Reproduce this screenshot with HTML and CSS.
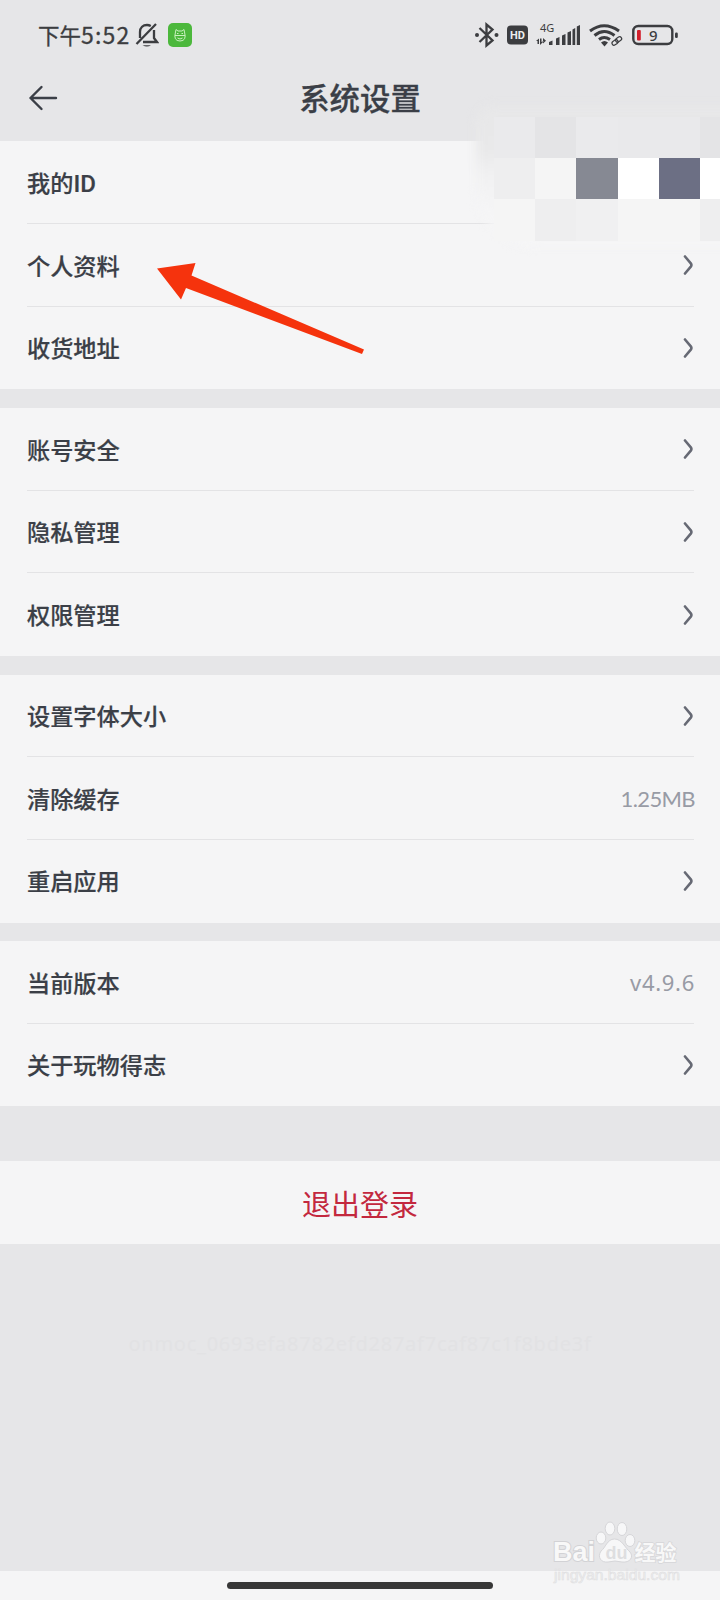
FILE: index.html
```html
<!DOCTYPE html>
<html lang="zh-CN">
<head>
<meta charset="utf-8">
<title>系统设置</title>
<link rel="stylesheet" href="styles.css">
</head>
<body>
<svg class="defs" width="0" height="0"><symbol id="chevron" viewBox="0 0 12 20"><path d="M3 1.500 8.800 8.400Q10 10 8.800 11.600L3 18.500" fill="none" stroke="currentColor" stroke-width="2.600" stroke-linecap="round"/></symbol></svg>
<div class="screen">
  <div class="status">
    <span class="time">下午<span class="clock">5:52</span></span>
    <svg class="bell" width="24" height="26" viewBox="0 0 24 26" fill="none" stroke="currentColor" stroke-width="2.300"><path d="M5 16V10C5 5.500 8 3 12 3Q14 3 15.800 4M19 8V16L22 20H8M1.500 22 21 2"/><path d="M7.500 23.200H16Q12 26 7.500 23.200Z" fill="currentColor" stroke="none"/></svg>
    <svg class="app" width="24" height="24" viewBox="0 0 24 24"><rect width="24" height="24" rx="5" fill="#4cb83c"/><g fill="none" stroke="#c9f1bf" stroke-width="1"><path d="M7.500 9 8 6.500 10 8H14L16 6.500 16.500 9Q19 18 12 18 5 18 7.500 9ZM7 12.500H17M9 10.500H10.500M13.500 10.500H15M9.500 15Q12 17 14.500 15"/></g></svg>
    <div class="indicators">
      <svg width="216" height="28" viewBox="0 0 216 28">
        <g fill="none" stroke="currentColor" stroke-width="2.300"><path d="M4.500 7 17.500 19.500 11.500 24.500V3.500L17.500 8.500 4.500 21"/></g>
        <circle cx="2" cy="14" r="2" fill="currentColor"/><circle cx="21.500" cy="14" r="2" fill="currentColor"/>
        <rect x="32" y="4.500" width="21" height="19" rx="4" fill="currentColor"/><text x="42.500" y="18" class="hd">HD</text>
        <text x="65" y="10.800" class="net">4G</text>
        <g fill="currentColor"><path d="M61 20 64 17.500V23H62.500V20ZM65 17.500H66.500V21L69 20 65 24ZM68 17.500V22.500L71 19.800 68 17Z"/><path d="M74 21 77.500 19.500V24H74ZM81 17.500 84.500 16V24H81ZM87 14.500 90.500 13V24H87ZM92.500 11.500 96 10V24H92.500ZM97.500 8.500 100.200 7V24H97.500ZM101.800 5.500 105 4V24H101.800Z"/></g>
        <g fill="none" stroke="currentColor" stroke-width="3"><path d="M115 10Q129 -.5 144 10M119.500 14.500Q129 6.500 139.500 14.500M124 18.500Q129 14.500 135 18.500"/></g><path d="M126 21.500Q129.500 18.500 133 21.500L129.500 25.500Z" fill="currentColor"/>
        <g fill="none" stroke="currentColor" stroke-width="1.200"><rect x="136.800" y="19.500" width="6.500" height="4" rx="2" transform="rotate(-35 140 21.500)"/><rect x="140.300" y="16.800" width="6.500" height="4" rx="2" transform="rotate(-35 143 18.500)"/></g>
        <rect x="158.300" y="5" width="39" height="18" rx="5" fill="none" stroke="currentColor" stroke-width="2.400"/><rect x="162" y="9" width="3.800" height="10.500" rx="1" fill="#d21f2b"/><text x="178.300" y="19.500" class="charge">9</text><rect x="200" y="11.500" width="2.800" height="5.500" rx="1.200" fill="currentColor"/>
      </svg>
    </div>
  </div>
  <header class="header">
    <svg class="back" width="30" height="26" viewBox="0 0 30 26" fill="none" stroke="currentColor" stroke-width="2.400" stroke-linecap="round" stroke-linejoin="round"><path d="M28 13H2.500M13.500 2 2.500 13 13.500 24"/></svg>
    <h1>系统设置</h1>
  </header>
  <main>
    <section class="group">
      <div class="row"><span>我的<span class="latin">ID</span></span></div>
      <div class="row"><span>个人资料</span><svg class="chev"><use href="#chevron"/></svg></div>
      <div class="row"><span>收货地址</span><svg class="chev"><use href="#chevron"/></svg></div>
    </section>
    <section class="group">
      <div class="row"><span>账号安全</span><svg class="chev"><use href="#chevron"/></svg></div>
      <div class="row"><span>隐私管理</span><svg class="chev"><use href="#chevron"/></svg></div>
      <div class="row"><span>权限管理</span><svg class="chev"><use href="#chevron"/></svg></div>
    </section>
    <section class="group">
      <div class="row"><span>设置字体大小</span><svg class="chev"><use href="#chevron"/></svg></div>
      <div class="row"><span>清除缓存</span><span class="value">1.25MB</span></div>
      <div class="row"><span>重启应用</span><svg class="chev"><use href="#chevron"/></svg></div>
    </section>
    <section class="group">
      <div class="row"><span>当前版本</span><span class="value version">v4.9.6</span></div>
      <div class="row"><span>关于玩物得志</span><svg class="chev"><use href="#chevron"/></svg></div>
    </section>
  </main>
  <div class="logout">退出登录</div>
  <div class="device">onmoc_0693efa8782efd287af7caf87c1f8bde3f</div>
  <footer class="navbar"><i class="handle"></i></footer>
  <div class="mosaic">
    <i class="a"></i><i class="b"></i><i class="a"></i><i class="c"></i><i class="c"></i><i class="b"></i>
    <i class="d"></i><i class="e"></i><i class="slate"></i><i class="white"></i><i class="indigo"></i><i class="white"></i>
    <i class="e"></i><i class="d"></i><i class="f"></i><i class="e"></i><i class="e"></i><i class="d"></i>
  </div>
  <svg class="pointer" width="208" height="96" viewBox="0 0 208 96"><path d="M0 5.500 38.500 0 34.500 12.500 207 86.500 205 91 29 25 24 36.500Z" fill="#f5330d"/></svg>
  <svg class="watermark" width="140" height="74" viewBox="0 0 140 74">
    <g fill="#f7f7f8" stroke="#d6d6d9" stroke-width="1">
      <ellipse cx="54" cy="24" rx="4.800" ry="6"/><ellipse cx="63" cy="14.500" rx="4.800" ry="6.500"/><ellipse cx="75" cy="15" rx="4.800" ry="6.500"/><ellipse cx="83" cy="26.500" rx="4.800" ry="6"/>
      <path d="M67.500 25C60 25 58.500 34 54 37 50 43 54 49 61 48Q68 46 75 48C83 49 87 43 83 38 78 34 75 25 67.500 25Z"/>
    </g>
    <text x="6" y="47" class="wm-latin" textLength="42" lengthAdjust="spacingAndGlyphs">Bai</text><text x="58.500" y="44.500" class="wm-du">du</text><text x="87.500" y="45.500" class="wm-cjk">经验</text>
    <text x="7" y="65.500" class="wm-url" textLength="126" lengthAdjust="spacingAndGlyphs">jingyan.baidu.com</text>
  </svg>
</div>
</body>
</html>
```

FILE: styles.css
```css
* { box-sizing: border-box; }
body { margin: 0; font-family: "Noto Sans CJK SC", sans-serif; color: #3b3f47; }
.defs { position: absolute; }
.screen { position: relative; width: 720px; height: 1600px; overflow: hidden; display: flex; flex-direction: column; background: #e6e6e8; }
.status { height: 69px; display: flex; align-items: center; padding-left: 38px; flex: none; color: #3c3d40; }
.time { width: 93px; font-size: 21.500px; line-height: 30px; white-space: nowrap; -webkit-text-stroke: .3px; }
.clock { font-size: 23px; letter-spacing: 1.200px; }
.bell { margin-left: 4px; }
.app { margin-left: 9px; }
.indicators { margin-left: auto; width: 245px; height: 28px; }
.indicators svg { display: block; }
.hd { fill: #eee; font: bold 11px Roboto, sans-serif; text-anchor: middle; }
.net { font: 11px "Noto Sans", sans-serif; fill: currentColor; }
.charge { text-anchor: middle; font: 500 15px "Noto Sans", sans-serif; fill: currentColor; }
.header { height: 72.400px; flex: none; display: grid; grid-template-columns: 60px 1fr 60px; align-items: center; padding: 0 28px 15px; }
.header h1 { margin: -1px 0 0; text-align: center; font-size: 30.400px; line-height: 44px; font-weight: 500; -webkit-text-stroke: .3px; }
main { display: grid; gap: 18.500px; }
.group { background: #f5f5f6; padding: 0 26px 0 27px; }
.row { height: 82.700px; display: flex; align-items: center; justify-content: space-between; font-size: 23.200px; font-weight: 500; line-height: 34px; border-bottom: 1px solid #e3e3e5; -webkit-text-stroke: .2px; }
.row > span:first-child { margin-top: -.6px; }
.row:last-child { border-bottom-color: transparent; }
.latin { font-family: Roboto, sans-serif; font-size: 24px; line-height: 1; }
.chev { width: 12px; height: 20px; margin-top: 1px; color: #666974; }
.value { font-family: Lato, sans-serif; font-size: 22px; letter-spacing: -.6px; margin: 1px -1px 0 0; font-weight: 400; color: #989ba5; -webkit-text-stroke: 0; }
.version { font-family: "Noto Sans", sans-serif; letter-spacing: .7px; }
.logout { height: 83px; flex: none; margin-top: 55px; display: flex; align-items: center; justify-content: center; background: #f5f5f6; color: #c3283e; font-size: 29px; line-height: 42px; }
.device { margin-top: 85px; text-align: center; font: 20px/30px "Noto Sans", sans-serif; letter-spacing: .75px; color: #e2e2e4; }
.navbar { height: 29px; flex: none; margin-top: auto; background: #f5f5f6; display: flex; justify-content: center; padding-top: 11px; }
.handle { width: 266px; height: 7px; border-radius: 4px; background: #373737; }
.mosaic { position: absolute; z-index: 1; left: 494px; top: 117px; width: 247px; display: grid; grid-template-columns: repeat(6, 41.200px); grid-auto-rows: 41.200px; }
.mosaic::before { content: ""; position: absolute; z-index: -1; left: -18px; top: -12px; width: 300px; height: 142px; border-radius: 18px 0 0 60px; background: linear-gradient(#e7e7e8 0, #e9e9ea 32%, #f1f1f2 50%, #f5f5f6 75%); filter: blur(5px); }
.a { background: #eaeaec; }
.b { background: #e4e4e6; }
.c { background: #e9e9eb; }
.d { background: #eeeeef; }
.e { background: #f5f5f5; }
.f { background: #f0f0f1; }
.slate { background: #868993; }
.white { background: #fff; }
.indigo { background: #6c6f84; }
.pointer { position: absolute; left: 157px; top: 263px; z-index: 2; }
.watermark { position: absolute; left: 547px; top: 1514px; }
.wm-latin { font: bold 27px "Liberation Sans", sans-serif; fill: #f8f8f8; stroke: #d2d2d5; stroke-width: 2px; paint-order: stroke; }
.wm-du { font: bold 18px "Liberation Sans", sans-serif; fill: #dedee0; }
.wm-cjk { font: 700 21px "Noto Sans CJK SC", sans-serif; fill: #f8f8f8; stroke: #d6d6d9; stroke-width: 1.500px; paint-order: stroke; }
.wm-url { font: 14px "Liberation Sans", sans-serif; fill: #efeff0; stroke: #dedee0; stroke-width: .5px; }
```
